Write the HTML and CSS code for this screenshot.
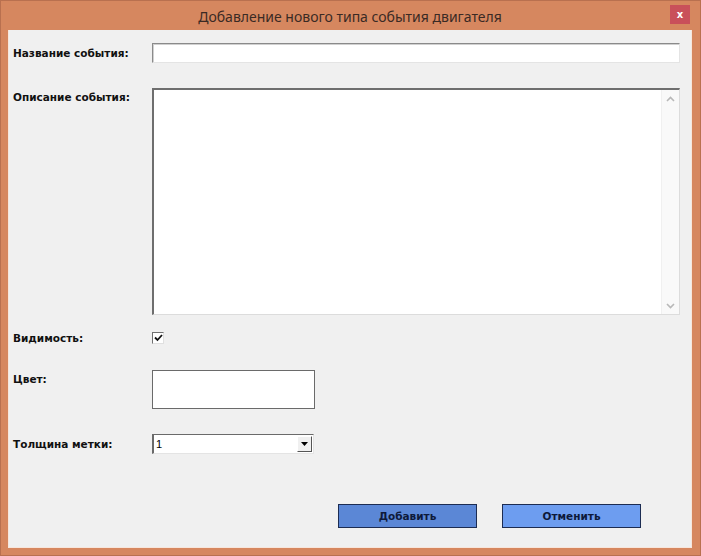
FILE: index.html
```html
<!DOCTYPE html>
<html lang="ru">
<head>
<meta charset="utf-8">
<title>Добавление нового типа события двигателя</title>
<link rel="stylesheet" href="styles.css">
</head>
<body>
<div class="window">
  <div class="titlebar">
    <span class="spacer"></span>
    <span class="title">Добавление нового типа события двигателя</span>
    <span class="close">x</span>
  </div>
  <div class="content">
    <div class="row row-name">
      <label class="label">Название события:</label>
      <div class="field input"></div>
    </div>
    <div class="row row-desc">
      <label class="label label-top">Описание события:</label>
      <div class="field textarea">
        <div class="scrollbar">
          <svg class="chev" width="9" height="6" viewBox="0 0 9 6"><path d="M1 5 L4.5 1.5 L8 5" fill="none" stroke="#b8b8b8" stroke-width="1.6"/></svg>
          <svg class="chev" width="9" height="6" viewBox="0 0 9 6"><path d="M1 1 L4.5 4.5 L8 1" fill="none" stroke="#b8b8b8" stroke-width="1.6"/></svg>
        </div>
      </div>
    </div>
    <div class="row row-vis">
      <label class="label">Видимость:</label>
      <div class="checkbox">
        <svg width="9" height="8" viewBox="0 0 9 8"><path d="M1 3.5 L3.5 6 L8 1" fill="none" stroke="#111" stroke-width="1.8"/></svg>
      </div>
    </div>
    <div class="row row-color">
      <label class="label label-top">Цвет:</label>
      <div class="colorbox"></div>
    </div>
    <div class="row row-thick">
      <label class="label">Толщина метки:</label>
      <div class="field select">
        <span class="value">1</span>
        <span class="dropbtn"><svg width="7" height="4" viewBox="0 0 7 4"><path d="M0 0 H7 L3.5 4 Z" fill="#000"/></svg></span>
      </div>
    </div>
    <div class="buttons">
      <button class="btn btn-add">Добавить</button>
      <button class="btn btn-cancel">Отменить</button>
    </div>
  </div>
</div>
</body>
</html>
```
FILE: styles.css
```css
html, body {
  margin: 0;
  padding: 0;
  background: #d6865f;
}
.window {
  width: 701px;
  height: 556px;
  box-sizing: border-box;
  background: #d6875f;
  border: 1px solid #b9704f;
  padding: 0 8px 7px 7px;
  display: flex;
  flex-direction: column;
}
.titlebar {
  height: 29px;
  display: grid;
  grid-template-columns: 22px 1fr 22px;
  align-items: center;
}
.title {
  text-align: center;
  font-family: "Noto Sans", sans-serif;
  font-size: 14px;
  color: #3a2a24;
  padding-top: 2px;
}
.close {
  width: 20px;
  height: 19px;
  margin-top: -3px;
  background: #c9505a;
  color: #fff;
  font: bold 10px "DejaVu Sans", sans-serif;
  display: flex;
  align-items: center;
  justify-content: center;
}
.content {
  flex: 1;
  background: #f0f0f0;
  border: 1px solid #f7e6dc;
  border-top: none;
  padding: 0;
  font-family: "DejaVu Sans", sans-serif;
  font-size: 10.5px;
  font-weight: bold;
  color: #111;
}
.row {
  display: flex;
  align-items: center;
}
.label {
  width: 139px;
  padding-left: 4px;
  flex: none;
}
.label-top {
  align-self: flex-start;
}
.row-name { margin-top: 13px; }
.row-desc { margin-top: 25px; align-items: flex-start; }
.row-desc .label { padding-top: 3px; }
.row-vis { margin-top: 17px; }
.row-color { margin-top: 26px; align-items: flex-start; }
.row-color .label { padding-top: 3px; }
.row-thick { margin-top: 25px; }

.field {
  box-sizing: border-box;
  background: #fff;
  border-top: 2px solid #6a6a6a;
  border-left: 2px solid #6a6a6a;
  border-right: 1px solid #e4e4e4;
  border-bottom: 1px solid #e4e4e4;
}
.input {
  width: 528px;
  height: 20px;
  border-top: 1px solid #8a8a8a;
  border-left: 1px solid #8a8a8a;
  box-shadow: inset 1px 1px 0 #d0d0d0;
}
.textarea {
  width: 528px;
  height: 227px;
  display: flex;
  justify-content: flex-end;
  border-top: 2px solid #6e6e6e;
  border-left: 2px solid #6e6e6e;
  border-right: 1px solid #dcdcdc;
  border-bottom: 1px solid #dcdcdc;
}
.scrollbar {
  width: 18px;
  background: #f9f9f9;
  border-left: 1px solid #f0f0f0;
  display: flex;
  flex-direction: column;
  justify-content: space-between;
  align-items: center;
  padding: 6px 0 5px;
  box-sizing: border-box;
}
.checkbox {
  width: 12px;
  height: 12px;
  box-sizing: border-box;
  background: #fff;
  border-top: 1px solid #707070;
  border-left: 1px solid #707070;
  border-right: 1px solid #e0e0e0;
  border-bottom: 1px solid #e0e0e0;
  display: flex;
  align-items: center;
  justify-content: center;
}
.colorbox {
  width: 163px;
  height: 39px;
  box-sizing: border-box;
  background: #fff;
  border: 1px solid #6a6a6a;
}
.select {
  width: 162px;
  height: 20px;
  display: flex;
  align-items: center;
  justify-content: space-between;
  border-top: 1px solid #6a6a6a;
  border-left: 2px solid #6a6a6a;
}
.select .value {
  font-family: "Liberation Sans", sans-serif;
  font-weight: normal;
  font-size: 11px;
  padding-left: 2px;
  color: #000;
}
.dropbtn {
  width: 15px;
  height: 16px;
  margin-right: 1px;
  box-sizing: border-box;
  background: #f0f0f0;
  border-top: 1px solid #fff;
  border-left: 1px solid #fff;
  border-right: 1px solid #555;
  border-bottom: 1px solid #555;
  display: flex;
  align-items: center;
  justify-content: center;
}
.buttons {
  display: flex;
  justify-content: flex-end;
  gap: 25px;
  margin-top: 50px;
  padding-right: 50px;
}
.btn {
  width: 139px;
  height: 24px;
  box-sizing: border-box;
  border: 1px solid #1c2c52;
  font-family: "DejaVu Sans", sans-serif;
  font-size: 10.5px;
  font-weight: bold;
  color: #0e1a3a;
  padding: 0;
}
.btn-add { background: #5b87d6; }
.btn-cancel { background: #6d9df0; }
```
